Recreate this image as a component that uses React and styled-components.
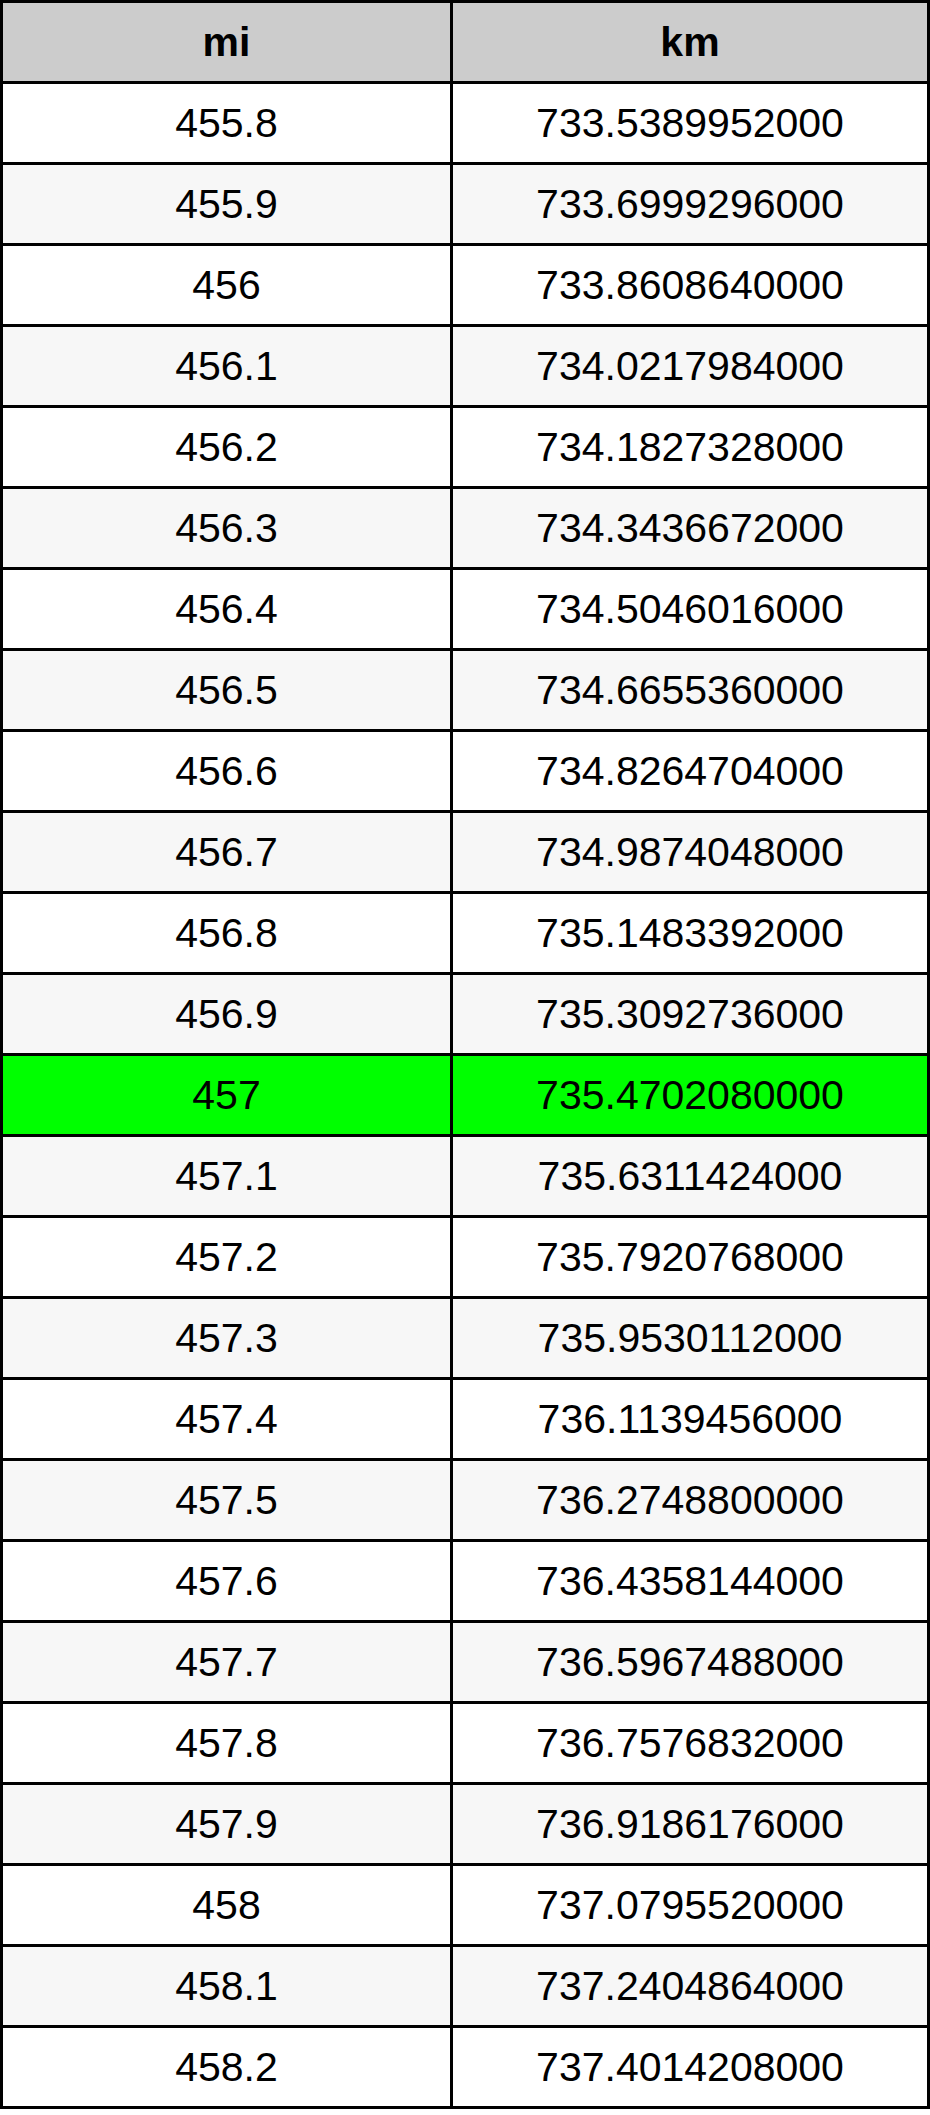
import React from 'react';
import styled, { createGlobalStyle } from 'styled-components';

const GlobalStyle = createGlobalStyle`
  body {
    margin: 0;
    background: #ffffff;
    font-family: "Liberation Sans", Arial, sans-serif;
  }
`;

const Table = styled.div`
  display: grid;
  grid-template-columns: 447px 474px;
  grid-auto-rows: 78px;
  gap: 3px;
  padding: 3px;
  width: 930px;
  box-sizing: border-box;
  background: #000000;
`;

const Cell = styled.div`
  display: flex;
  align-items: center;
  justify-content: center;
  font-size: 41px;
  color: #000000;
  font-weight: ${(p) => (p.head ? 700 : 400)};
  background: ${(p) =>
    p.head ? '#cccccc' : p.hit ? '#00ff00' : p.odd ? '#f7f7f7' : '#ffffff'};
`;

const rows = [
  ['455.8', '733.5389952000'],
  ['455.9', '733.6999296000'],
  ['456', '733.8608640000'],
  ['456.1', '734.0217984000'],
  ['456.2', '734.1827328000'],
  ['456.3', '734.3436672000'],
  ['456.4', '734.5046016000'],
  ['456.5', '734.6655360000'],
  ['456.6', '734.8264704000'],
  ['456.7', '734.9874048000'],
  ['456.8', '735.1483392000'],
  ['456.9', '735.3092736000'],
  ['457', '735.4702080000'],
  ['457.1', '735.6311424000'],
  ['457.2', '735.7920768000'],
  ['457.3', '735.9530112000'],
  ['457.4', '736.1139456000'],
  ['457.5', '736.2748800000'],
  ['457.6', '736.4358144000'],
  ['457.7', '736.5967488000'],
  ['457.8', '736.7576832000'],
  ['457.9', '736.9186176000'],
  ['458', '737.0795520000'],
  ['458.1', '737.2404864000'],
  ['458.2', '737.4014208000'],
];

const App = () => (
  <>
    <GlobalStyle />
    <Table>
      <Cell head>mi</Cell>
      <Cell head>km</Cell>
      {rows.map(([mi, km], i) => (
        <React.Fragment key={mi}>
          <Cell odd={i % 2 === 1} hit={mi === '457'}>{mi}</Cell>
          <Cell odd={i % 2 === 1} hit={mi === '457'}>{km}</Cell>
        </React.Fragment>
      ))}
    </Table>
  </>
);

export default App;
